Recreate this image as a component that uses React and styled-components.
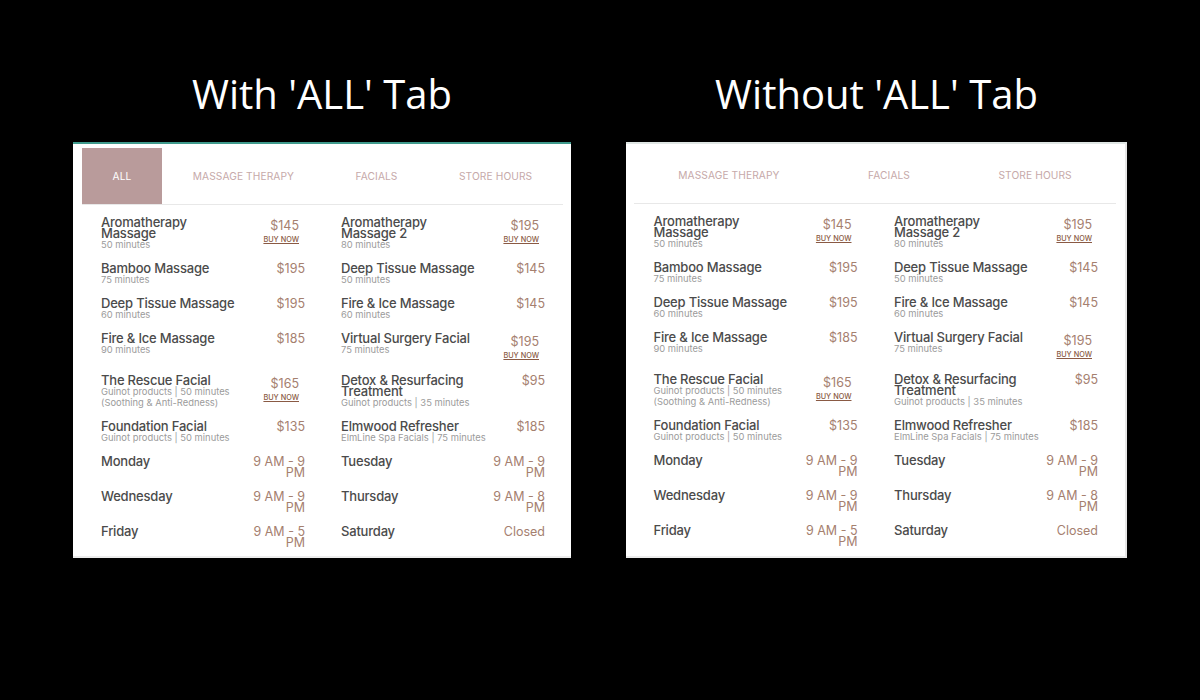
import React from 'react';
import styled, { createGlobalStyle } from 'styled-components';

const GlobalStyle = createGlobalStyle`
  html, body {
    margin: 0;
    padding: 0;
    background: #000;
  }
  body {
    font-family: Inter, "Noto Sans", sans-serif;
  }
`;

const TREATMENTS = [
  [
    { name: ['Aromatherapy', 'Massage'], info: ['50 minutes'], price: '$145', buy: true },
    { name: ['Aromatherapy', 'Massage 2'], info: ['80 minutes'], price: '$195', buy: true },
  ],
  [
    { name: ['Bamboo Massage'], info: ['75 minutes'], price: '$195' },
    { name: ['Deep Tissue Massage'], info: ['50 minutes'], price: '$145' },
  ],
  [
    { name: ['Deep Tissue Massage'], info: ['60 minutes'], price: '$195' },
    { name: ['Fire & Ice Massage'], info: ['60 minutes'], price: '$145' },
  ],
  [
    { name: ['Fire & Ice Massage'], info: ['90 minutes'], price: '$185' },
    { name: ['Virtual Surgery Facial'], info: ['75 minutes'], price: '$195', buy: true },
  ],
  [
    {
      name: ['The Rescue Facial'],
      info: ['Guinot products | 50 minutes', '(Soothing & Anti-Redness)'],
      price: '$165',
      buy: true,
    },
    { name: ['Detox & Resurfacing', 'Treatment'], info: ['Guinot products | 35 minutes'], price: '$95' },
  ],
  [
    { name: ['Foundation Facial'], info: ['Guinot products | 50 minutes'], price: '$135' },
    { name: ['Elmwood Refresher'], info: ['ElmLine Spa Facials | 75 minutes'], price: '$185' },
  ],
  [
    { name: ['Monday'], info: [], price: ['9 AM - 9', 'PM'] },
    { name: ['Tuesday'], info: [], price: ['9 AM - 9', 'PM'] },
  ],
  [
    { name: ['Wednesday'], info: [], price: ['9 AM - 9', 'PM'] },
    { name: ['Thursday'], info: [], price: ['9 AM - 8', 'PM'] },
  ],
  [
    { name: ['Friday'], info: [], price: ['9 AM - 5', 'PM'] },
    { name: ['Saturday'], info: [], price: ['Closed'] },
  ],
];

const Item = ({ item }) => (
  <ItemRow>
    <ItemText>
      {item.name.map((line) => (
        <ItemName key={line}>{line}</ItemName>
      ))}
      {item.info.map((line) => (
        <ItemInfo key={line}>{line}</ItemInfo>
      ))}
    </ItemText>
    {item.buy ? (
      <BuyBlock>
        <BuyPrice>{item.price}</BuyPrice>
        <BuyLink href="#">BUY NOW</BuyLink>
      </BuyBlock>
    ) : (
      <PriceBlock>
        {[].concat(item.price).map((line) => (
          <PriceLine key={line}>{line}</PriceLine>
        ))}
      </PriceBlock>
    )}
  </ItemRow>
);

const MenuPanel = ({ title, tabs, plain }) => (
  <Column $plain={plain}>
    <Title>{title}</Title>
    <Panel $plain={plain}>
      <TabBar $plain={plain}>
        {tabs.map((tab) => (
          <Tab key={tab} $active={tab === 'ALL'}>
            {tab}
          </Tab>
        ))}
      </TabBar>
      <ItemGrid $plain={plain}>
        {TREATMENTS.flat().map((item, i) => (
          <Item key={i} item={item} />
        ))}
      </ItemGrid>
    </Panel>
  </Column>
);

export default function App() {
  return (
    <>
      <GlobalStyle />
      <Page>
        <MenuPanel
          title="With 'ALL' Tab"
          tabs={['ALL', 'MASSAGE THERAPY', 'FACIALS', 'STORE HOURS']}
        />
        <MenuPanel
          plain
          title="Without 'ALL' Tab"
          tabs={['MASSAGE THERAPY', 'FACIALS', 'STORE HOURS']}
        />
      </Page>
    </>
  );
}

const Page = styled.div`
  width: 1200px;
  height: 700px;
  box-sizing: border-box;
  padding: 72px 0 0 73px;
  display: flex;
  gap: 55px;
  overflow: hidden;
  background: #000;
`;

const Column = styled.div`
  width: ${(props) => (props.$plain ? '501px' : '498px')};
`;

const Title = styled.h2`
  margin: 0 0 26px;
  height: 44px;
  font-family: 'Open Sans', sans-serif;
  font-size: 40px;
  font-weight: 400;
  line-height: 44px;
  text-align: center;
  color: #fff;
  white-space: nowrap;
`;

const Panel = styled.div`
  height: 416px;
  box-sizing: border-box;
  padding: ${(props) => (props.$plain ? '1px 9px 0 8px' : '0 8px 0 9px')};
  background: #fff;
  border-top: 2px solid ${(props) => (props.$plain ? '#dfe6e4' : '#3f9a8c')};
  border-bottom: 2px solid #ececec;
  border-right: ${(props) => (props.$plain ? '2px solid #e6e6e6' : '0')};
`;

const TabBar = styled.div`
  display: flex;
  height: 56px;
  margin-top: ${(props) => (props.$plain ? '2px' : '4px')};
  border-bottom: 1px solid #e8e8e8;
`;

const Tab = styled.div`
  flex: 1 1 auto;
  display: flex;
  align-items: center;
  justify-content: center;
  box-sizing: border-box;
  min-width: ${(props) => (props.$active ? '80px' : '0')};
  padding: 0 30px;
  font-size: 10.2px;
  letter-spacing: 0.1px;
  white-space: nowrap;
  color: ${(props) => (props.$active ? '#fff' : '#c6a9a9')};
  background: ${(props) => (props.$active ? '#b99b9b' : 'transparent')};
  flex-grow: ${(props) => (props.$active ? 0 : 1)};
`;

const ItemGrid = styled.div`
  display: grid;
  grid-template-columns: 204px 204px;
  column-gap: ${(props) => (props.$plain ? '36.5px' : '36px')};
  padding: 12px 0 0 ${(props) => (props.$plain ? '19.5px' : '19px')};
`;

const ItemRow = styled.div`
  display: flex;
  justify-content: space-between;
  padding-bottom: 13px;
`;

const ItemText = styled.div`
  min-width: 0;
`;

const ItemName = styled.div`
  font-size: 13px;
  font-weight: 500;
  letter-spacing: -0.2px;
  line-height: 11px;
  color: #4b4b4b;
  white-space: nowrap;
`;

const ItemInfo = styled.div`
  font-size: 9.4px;
  line-height: 11px;
  color: #9b9b9b;
  white-space: nowrap;
`;

const PriceBlock = styled.div`
  text-align: right;
`;

const PriceLine = styled.div`
  font-size: 12.5px;
  line-height: 11px;
  color: #a5806f;
  white-space: nowrap;
`;

const BuyBlock = styled.div`
  display: flex;
  flex-direction: column;
  align-items: flex-end;
  box-sizing: border-box;
  height: 29px;
  padding: 3px 6px 0 0;
`;

const BuyPrice = styled.div`
  font-size: 12.5px;
  line-height: 11px;
  color: #a5806f;
`;

const BuyLink = styled.a`
  margin-top: 4px;
  font-size: 7.3px;
  line-height: 9px;
  font-weight: 500;
  color: #8a5a44;
  text-decoration: underline;
  white-space: nowrap;
`;
